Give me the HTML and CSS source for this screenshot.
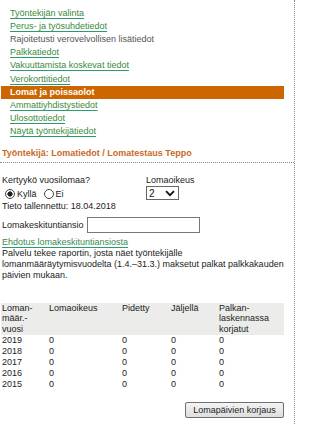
FILE: index.html
```html
<!DOCTYPE html>
<html lang="fi">
<head>
<meta charset="utf-8">
<title>Lomatiedot</title>
<link rel="stylesheet" href="styles.css">
</head>
<body>
<div class="page">
  <ul class="menu">
    <li><a href="#">Työntekijän valinta</a></li>
    <li><a href="#">Perus- ja työsuhdetiedot</a></li>
    <li><span class="plain">Rajoitetusti verovelvollisen lisätiedot</span></li>
    <li><a href="#">Palkkatiedot</a></li>
    <li><a href="#">Vakuuttamista koskevat tiedot</a></li>
    <li><a href="#">Verokorttitiedot</a></li>
    <li class="active"><span>Lomat ja poissaolot</span></li>
    <li><a href="#">Ammattiyhdistystiedot</a></li>
    <li><a href="#">Ulosottotiedot</a></li>
    <li><a href="#">Näytä työntekijätiedot</a></li>
  </ul>

  <h1 class="title">Työntekijä: Lomatiedot / Lomatestaus Teppo</h1>

  <div class="form">
    <div class="top">
      <div class="col-left">
        <div class="line">Kertyykö vuosilomaa?</div>
        <div class="radios">
          <label class="radio"><input type="radio" name="k" checked><span>Kyllä</span></label>
          <label class="radio"><input type="radio" name="k"><span>Ei</span></label>
        </div>
        <div class="line">Tieto tallennettu: 18.04.2018</div>
      </div>
      <div class="col-right">
        <div class="line">Lomaoikeus</div>
        <div class="select-wrap">
          <select class="select"><option>2</option></select>
          <svg class="chev" width="10" height="7" viewBox="0 0 10 7"><path d="M1 1.2 L5 5.2 L9 1.2" fill="none" stroke="#111" stroke-width="1.8"/></svg>
        </div>
      </div>
    </div>

    <div class="field">
      <span>Lomakeskituntiansio</span>
      <input class="text" type="text">
    </div>

    <a class="suggest" href="#">Ehdotus lomakeskituntiansiosta</a>
    <p class="desc">Palvelu tekee raportin, josta näet työntekijälle lomanmääräytymisvuodelta (1.4.–31.3.) maksetut palkat palkkakauden päivien mukaan.</p>

    <table class="grid">
      <thead>
        <tr>
          <th class="c1">Loman-<br>määr.-<br>vuosi</th>
          <th class="c2">Lomaoikeus</th>
          <th class="c3">Pidetty</th>
          <th class="c4">Jäljellä</th>
          <th class="c5">Palkan-<br>laskennassa<br>korjatut</th>
        </tr>
      </thead>
      <tbody>
        <tr><td>2019</td><td>0</td><td>0</td><td>0</td><td>0</td></tr>
        <tr><td>2018</td><td>0</td><td>0</td><td>0</td><td>0</td></tr>
        <tr><td>2017</td><td>0</td><td>0</td><td>0</td><td>0</td></tr>
        <tr><td>2016</td><td>0</td><td>0</td><td>0</td><td>0</td></tr>
        <tr><td>2015</td><td>0</td><td>0</td><td>0</td><td>0</td></tr>
      </tbody>
    </table>

    <div class="actions">
      <button class="btn" type="button">Lomapäivien korjaus</button>
    </div>
  </div>
</div>
</body>
</html>
```

FILE: styles.css
```css
html, body {
  margin: 0;
  padding: 0;
  background: #fff;
}
body {
  font-family: "Liberation Sans", Arial, sans-serif;
  font-size: 9px;
  color: #222;
}
.page {
  width: 295px;
  min-height: 424px;
  border-right: 1px dotted #8a8a8a;
  box-sizing: border-box;
}
.menu {
  list-style: none;
  margin: 0;
  padding: 6.7px 0 0 0;
  width: 283px;
  margin-left: 1px;
}
.menu li {
  height: 13.2px;
  line-height: 13.2px;
  padding-left: 9px;
  white-space: nowrap;
}
.menu a {
  color: #3c8a3e;
  text-decoration: underline;
  text-decoration-color: #2a9a70;
  text-underline-offset: 1.5px;
}
.menu .plain {
  color: #555;
}
.menu li.active {
  background: #cc6600;
  color: #fff;
  font-weight: bold;
}
.title {
  margin: 9px 0 0 0;
  padding: 0 0 3px 2px;
  font-size: 9px;
  line-height: 11px;
  font-weight: bold;
  color: #c86a28;
  border-bottom: 1px dotted #8a8a8a;
}
.form {
  padding: 12px 0 0 2px;
}
.top {
  display: flex;
}
.col-left {
  width: 144px;
}
.line {
  line-height: 11px;
  height: 11px;
}
.radios {
  display: flex;
  align-items: center;
  height: 15px;
  padding-top: 1px;
  box-sizing: border-box;
}
.radio {
  display: flex;
  align-items: center;
  margin-right: 4px;
}
.radio input {
  appearance: none;
  -webkit-appearance: none;
  width: 10px;
  height: 10px;
  margin: 0 2px 0 3px;
  border: 1px solid #444;
  border-radius: 50%;
  background: #fff;
  box-sizing: border-box;
  position: relative;
}
.radio input:checked {
  background: radial-gradient(circle, #222 0 2.4px, #fff 2.8px);
}
.col-right {
  display: flex;
  flex-direction: column;
}
.select-wrap {
  position: relative;
  width: 33px;
  height: 14px;
  margin-top: 0.5px;
}
.select {
  appearance: none;
  -webkit-appearance: none;
  width: 33px;
  height: 14px;
  border: 1px solid #666;
  border-radius: 0;
  background: #fff;
  font-family: "Liberation Sans", Arial, sans-serif;
  font-size: 10px;
  padding: 0 0 0 2px;
  margin: 0;
  color: #111;
}
.chev {
  position: absolute;
  right: 4px;
  top: 4px;
  pointer-events: none;
}
.field {
  display: flex;
  align-items: center;
  margin-top: 5.5px;
  height: 16px;
}
.field span {
  margin-right: 3px;
}
.text {
  width: 113px;
  height: 16px;
  box-sizing: border-box;
  border: 1px solid #777;
  margin: 0;
  padding: 0;
}
.suggest {
  display: block;
  margin-top: 3.5px;
  line-height: 11px;
  color: #3a8a52;
  text-decoration: underline;
  text-decoration-color: #2a9a70;
  text-underline-offset: 1.5px;
}
.desc {
  margin: 0;
  line-height: 11px;
  width: 285px;
}
.grid {
  margin: 22px 0 0 -1px;
  border-collapse: collapse;
  width: 283px;
  table-layout: fixed;
}
.grid th {
  background: #ececea;
  font-weight: normal;
  text-align: left;
  vertical-align: top;
  line-height: 10.7px;
  padding: 0 0 0 1px;
  height: 32px;
}
.grid td {
  padding: 0 0 0 1px;
  line-height: 11.2px;
  height: 11.2px;
}
.grid .c1 { width: 46px; }
.grid .c2 { width: 72px; }
.grid .c3 { width: 48px; }
.grid .c4 { width: 47px; }
.actions {
  display: flex;
  justify-content: flex-end;
  width: 282px;
  margin-top: 11px;
}
.btn {
  height: 16px;
  width: 99px;
  padding: 0;
  font-family: "Liberation Sans", Arial, sans-serif;
  font-size: 9px;
  color: #222;
  border: 1px solid #707070;
  border-radius: 2px;
  background: linear-gradient(#f4f4f4, #dedede);
}
```
